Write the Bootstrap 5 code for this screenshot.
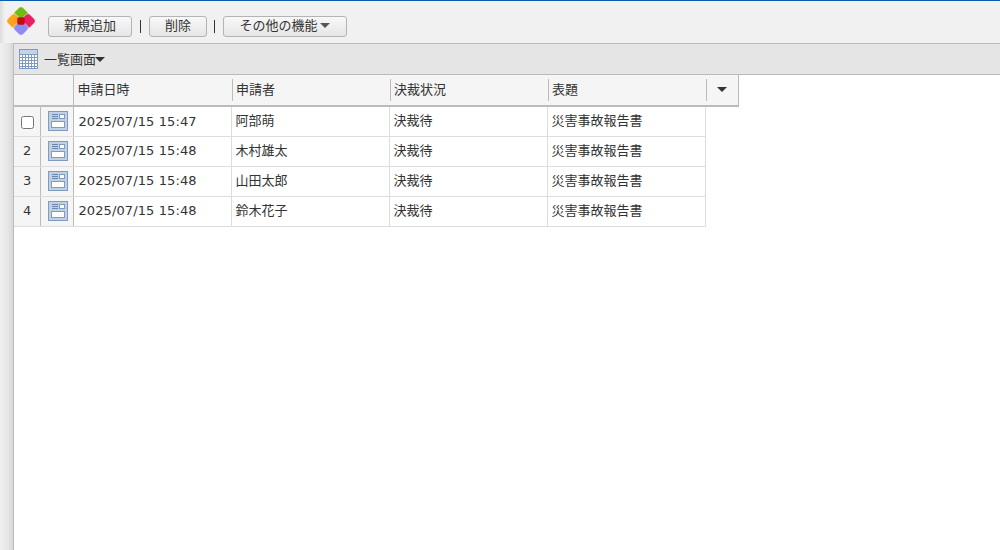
<!DOCTYPE html>
<html lang="ja">
<head>
<meta charset="utf-8">
<title>一覧画面</title>
<link href="https://cdn.jsdelivr.net/npm/bootstrap@5.3.0/dist/css/bootstrap.min.css" rel="stylesheet">
<style>
html,body{height:100%;}
body{font-family:"DejaVu Sans","Noto Sans CJK JP",sans-serif;font-size:13px;color:#333;background:#fff;overflow:hidden;border-top:1px solid #0a5cad;}
.page-wrap{height:549px;}
.side-strip{width:13px;flex:none;background:linear-gradient(to right,#f0f0f0,#e6e6e6 60%,#d8d8d8);}
.main-pane{flex:1 1 auto;min-width:0;border-left:1px solid #bbb;}
.top-strip{margin-left:-14px;padding-left:7px;height:42px;background:linear-gradient(to right,#dcdcdc,#f1f1f1 5px);}
.logo-box{width:28px;height:28px;flex:none;margin-top:6px;}
.tool-btn{font-family:"Noto Sans CJK JP",sans-serif;font-size:13px;line-height:14px;height:21px;padding:0 0 4px;color:#333;border:1px solid #b4b4b4;border-radius:3px;background:linear-gradient(#f8f8f8,#e6e6e6);}
.tool-btn:hover{color:#333;border-color:#b4b4b4;}
.w-add{width:84px;margin-left:13px;}
.w-del{width:58px;}
.w-more{width:124px;}
.sep-bar{width:1px;height:13px;background:#333;margin:4px 8px 0;}
.sep-alt{margin-left:7px;}
.tool-row{padding-top:15px;}
.tri{display:inline-block;width:0;height:0;border-left:5px solid transparent;border-right:5px solid transparent;border-top:5px solid #555;vertical-align:2px;}
.tri-dark{border-top-color:#333;}
.title-bar{height:32px;background:#e5e5e5;border-top:1px solid #bbb;border-bottom:1px solid #bbb;padding-left:5px;font-family:"Noto Sans CJK JP",sans-serif;}
.title-bar svg{margin-right:6px;}
.title-bar .tri{margin-left:-1px;}
.grid-table{table-layout:fixed;border-collapse:collapse;width:724px;margin:0;}
.grid-table th,.grid-table td{padding:0;font-weight:400;overflow:hidden;white-space:nowrap;}
.grid-table thead th{height:31px;background:#f5f5f5;border-bottom:2px solid #bbb;}
.grid-table thead th.c-last{border-right:1px solid #bbb;}
.grid-table tbody td{height:30px;border-bottom:1px solid #ddd;border-right:1px solid #ddd;padding-left:4px;color:#333;}
.grid-table thead th.c-a{border-right:0;}
.grid-table thead th.c-b{border-right:1px solid #bbb;}
.grid-table tbody td.num-cell{background:#f5f5f5;border-right:1px solid #bbb;padding:0 0 0 1px;text-align:center;}
.grid-table tbody td.ico-cell{background:#f5f5f5;border-right:1px solid #bbb;padding:0 0 0 2px;text-align:center;}
.grid-table tbody td.ico-cell svg{display:inline-block;vertical-align:middle;margin-top:-1px;}
.head-label{display:block;margin:-1px 0 0 1px;height:22px;line-height:20px;padding-left:3px;border-left:1px solid #bbb;font-family:"Noto Sans CJK JP",sans-serif;}
.first-head{border-left:0;margin-left:0;padding-left:4px;}
.grid-table tbody td.cjk-cell{font-family:"Noto Sans CJK JP",sans-serif;padding-bottom:3px;padding-left:4px;}
.grid-table tbody td.date-cell{letter-spacing:.1px;padding-left:5px;}
.row-check{width:13px;height:13px;margin:0;border:1px solid #767676;border-radius:2px;vertical-align:middle;}
.more-label{display:flex;align-items:center;justify-content:center;padding:0 1px 0 0;}
</style>
</head>
<body>
<div class="d-flex page-wrap">
  <div class="side-strip"></div>
  <div class="main-pane">
    <div class="top-strip d-flex">
      <svg class="logo-box" viewBox="0 0 28 28" aria-label="logo">
        <g stroke="#fff" stroke-width=".5">
        <rect x="8" y="1" width="12" height="12" rx="3" transform="rotate(45 14 7)" fill="#6fbb12"/>
        <rect x="1" y="8" width="12" height="12" rx="3" transform="rotate(45 7 14)" fill="#ffa21a"/>
        <rect x="15" y="8" width="12" height="12" rx="3" transform="rotate(45 21 14)" fill="#ea1e63"/>
        <rect x="8" y="15" width="12" height="12" rx="3" transform="rotate(45 14 21)" fill="#8c8cf5"/>
        </g>
        <rect x="10.3" y="10.3" width="7.4" height="7.4" rx="1.6" fill="#c00d0d"/>
      </svg>
      <div class="tool-row d-flex align-items-start">
        <button type="button" class="btn tool-btn w-add">新規追加</button>
        <span class="sep-bar"></span>
        <button type="button" class="btn tool-btn w-del">削除</button>
        <span class="sep-bar sep-alt"></span>
        <button type="button" class="btn tool-btn w-more">その他の機能 <span class="tri"></span></button>
      </div>
    </div>
    <div class="title-bar d-flex align-items-center">
      <svg width="19" height="20" viewBox="0 0 19 20" aria-hidden="true">
        <rect x=".5" y=".5" width="18" height="19" fill="#fff" stroke="#7e9cbf"/>
        <rect x="1" y="1" width="17" height="4" fill="#c6d3e6"/>
        <path d="M1 5.5h17M1 8.5h17M1 11.5h17M1 14.5h17M1 17.5h17M3.5 5v14M6.5 5v14M9.5 5v14M12.5 5v14M15.5 5v14" stroke="#7e9cbf" stroke-width="1" fill="none"/>
      </svg>
      <span>一覧画面</span><span class="tri tri-dark"></span>
    </div>
    <table class="grid-table">
      <colgroup><col style="width:26px"><col style="width:33px"><col style="width:158px"><col style="width:158px"><col style="width:158px"><col style="width:158px"><col style="width:33px"></colgroup>
      <thead>
        <tr>
          <th class="c-a"></th>
          <th class="c-b"></th>
          <th><span class="head-label first-head">申請日時</span></th>
          <th><span class="head-label">申請者</span></th>
          <th><span class="head-label">決裁状況</span></th>
          <th><span class="head-label">表題</span></th>
          <th class="c-last"><span class="head-label more-label"><span class="tri tri-dark"></span></span></th>
        </tr>
      </thead>
      <tbody>
        <tr>
          <td class="num-cell"><input type="checkbox" class="row-check" aria-label="選択"></td>
          <td class="ico-cell"><svg width="20" height="20" viewBox="0 0 20 20" aria-hidden="true"><use href="#form-ico"/></svg></td>
          <td class="date-cell">2025/07/15 15:47</td><td class="cjk-cell">阿部萌</td><td class="cjk-cell">決裁待</td><td class="cjk-cell">災害事故報告書</td>
        </tr>
        <tr>
          <td class="num-cell">2</td>
          <td class="ico-cell"><svg width="20" height="20" viewBox="0 0 20 20" aria-hidden="true"><use href="#form-ico"/></svg></td>
          <td class="date-cell">2025/07/15 15:48</td><td class="cjk-cell">木村雄太</td><td class="cjk-cell">決裁待</td><td class="cjk-cell">災害事故報告書</td>
        </tr>
        <tr>
          <td class="num-cell">3</td>
          <td class="ico-cell"><svg width="20" height="20" viewBox="0 0 20 20" aria-hidden="true"><use href="#form-ico"/></svg></td>
          <td class="date-cell">2025/07/15 15:48</td><td class="cjk-cell">山田太郎</td><td class="cjk-cell">決裁待</td><td class="cjk-cell">災害事故報告書</td>
        </tr>
        <tr>
          <td class="num-cell">4</td>
          <td class="ico-cell"><svg width="20" height="20" viewBox="0 0 20 20" aria-hidden="true"><use href="#form-ico"/></svg></td>
          <td class="date-cell">2025/07/15 15:48</td><td class="cjk-cell">鈴木花子</td><td class="cjk-cell">決裁待</td><td class="cjk-cell">災害事故報告書</td>
        </tr>
      </tbody>
    </table>
  </div>
</div>
<svg width="0" height="0" class="d-block" aria-hidden="true">
  <symbol id="form-ico" viewBox="0 0 20 20">
    <rect x=".5" y=".5" width="19" height="19" fill="#c3d0e4" stroke="#7e9cbf"/>
    <rect x="3.5" y="10.5" width="13" height="6" fill="#fff" stroke="#7e9cbf"/>
    <rect x="11.5" y="3.5" width="5" height="4" fill="#fff" stroke="#7e9cbf"/>
    <path d="M4 3.5h6M4 5.5h6M4 7.5h6" stroke="#6a87ad" stroke-width="1" fill="none"/>
  </symbol>
</svg>
<script src="https://cdn.jsdelivr.net/npm/bootstrap@5.3.0/dist/js/bootstrap.bundle.min.js"></script>
</body>
</html>
